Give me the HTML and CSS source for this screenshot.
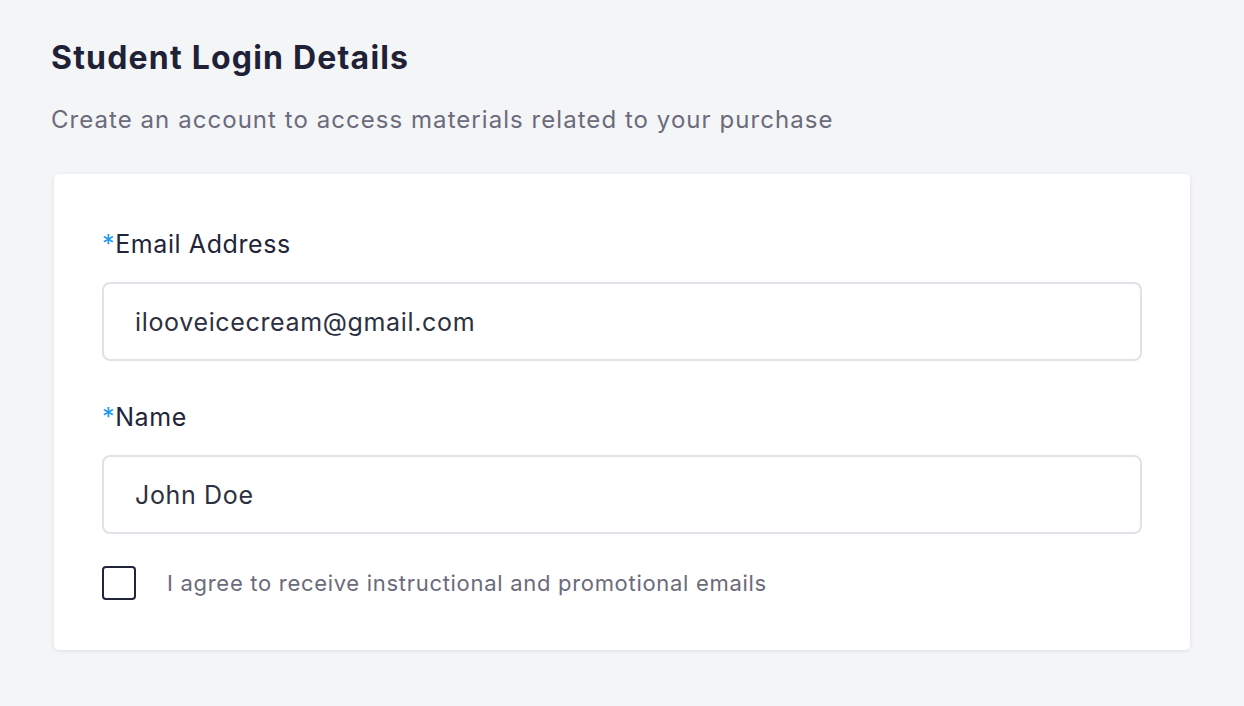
FILE: index.html
```html
<!DOCTYPE html>
<html>
    <head>
        <title> Student Login Details </title>
        <link rel="stylesheet" href="styles.css">
    </head>
    <body>
        <div class="page">
            <h1 class="title">Student Login Details</h1>
            <p class="subtitle">Create an account to access materials related to your purchase</p>

            <div class="card">
                <label class="field-label" for="email"><span class="required">*</span>Email Address</label>
                <input class="text-input" id="email" type="text" value="ilooveicecream@gmail.com">

                <label class="field-label" for="name"><span class="required">*</span>Name</label>
                <input class="text-input" id="name" type="text" value="John Doe">

                <label class="agree-row">
                    <input class="checkbox" type="checkbox">
                    <span class="agree-text">I agree to receive instructional and promotional emails</span>
                </label>
            </div>
        </div>
    </body>
</html>
```

FILE: styles.css
```css
html, body{
    margin:0;
    background-color:#f4f5f7;
}

body{
    font-family:Inter, "Open Sans", Arial, sans-serif;
    color:#22253a;
}

.page{
    padding:38px 54px 56px 51px;
}

.title{
    margin:0;
    font-size:32px;
    font-weight:bold;
    line-height:40px;
    letter-spacing:1.2px;
    color:#1f2236;
}

.subtitle{
    margin:26px 0 0 0;
    font-size:24px;
    line-height:32px;
    letter-spacing:1.05px;
    color:#6b6b7b;
}

.card{
    margin:38px 0 0 3px;
    background-color:white;
    border-radius:5px;
    box-shadow:0 1px 4px rgba(20,20,60,0.10);
    padding:54px 48px 50px 48px;
    display:flex;
    flex-direction:column;
}

.field-label{
    font-size:25px;
    line-height:32px;
    letter-spacing:0.6px;
    color:#22253a;
}

.required{
    color:#1a9bf0;
}

.text-input{
    box-sizing:border-box;
    margin-top:22px;
    margin-bottom:40px;
    height:79px;
    width:100%;
    border:2px solid #e1e1e7;
    border-radius:8px;
    padding:0 31px;
    font-family:inherit;
    font-size:25px;
    letter-spacing:0.65px;
    color:#2d3040;
    background-color:white;
    outline:none;
}

.text-input:last-of-type{
    margin-bottom:0;
}

.agree-row{
    margin-top:32px;
    display:flex;
    align-items:center;
    gap:31px;
}

.checkbox{
    appearance:none;
    -webkit-appearance:none;
    margin:0;
    width:34px;
    height:34px;
    border:2px solid #22253a;
    border-radius:4px;
    background-color:white;
}

.agree-text{
    font-size:22px;
    letter-spacing:0.7px;
    color:#6b6b7b;
}
```
